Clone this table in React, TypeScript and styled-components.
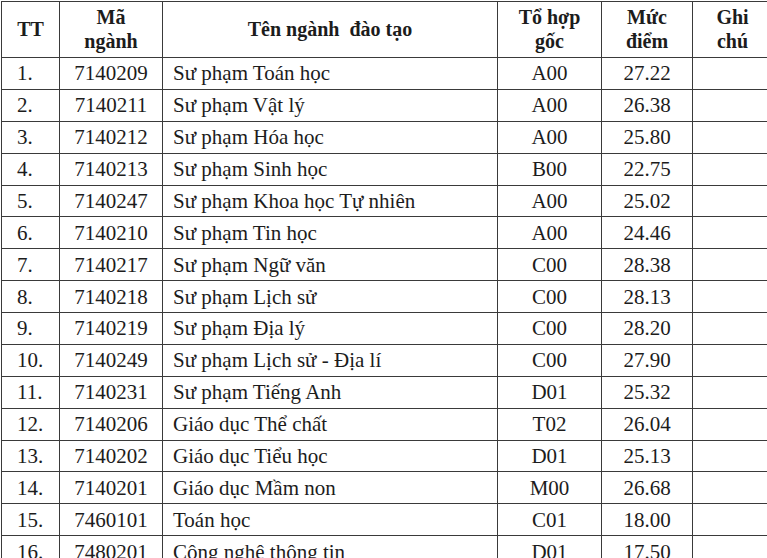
import React from 'react';
import styled, { createGlobalStyle } from 'styled-components';

const GlobalStyle = createGlobalStyle`
    html, body {
        margin: 0;
        padding: 0;
        background: #fff;
        overflow: hidden;
    }
    body {
        font-family: 'Liberation Serif', 'DejaVu Serif', serif;
        color: #1c1c1c;
    }
`;

const Page = styled.div`
    width: 767px;
    height: 558px;
    overflow: hidden;
    padding: 1px 0 0 1px;
    box-sizing: border-box;
`;

const Table = styled.table`
    border-collapse: collapse;
    table-layout: fixed;
    width: 771px;
    font-family: 'Liberation Serif', 'DejaVu Serif', serif;
    font-size: 21px;
    color: #1c1c1c;
`;

const Col = styled.col<{ w: number }>`
    width: ${(p) => p.w}px;
`;

const Head = styled.th`
    height: 53px;
    border: 1.5px solid #3a3a3a;
    font-weight: bold;
    font-size: 20px;
    line-height: 24px;
    text-align: center;
    vertical-align: middle;
    padding: 0 0 2px 0;
`;

type CellProps = {
    align?: 'left' | 'center';
    pad?: number;
};

const Cell = styled.td<CellProps>`
    height: 30.88px;
    border: 1.5px solid #3a3a3a;
    padding: 0 0 0 ${(p) => p.pad ?? 0}px;
    text-align: ${(p) => p.align ?? 'center'};
    vertical-align: middle;
    white-space: nowrap;
    line-height: 30px;
`;

const rows: [string, string, string, string, string][] = [
    ['1.', '7140209', 'Sư phạm Toán học', 'A00', '27.22'],
    ['2.', '7140211', 'Sư phạm Vật lý', 'A00', '26.38'],
    ['3.', '7140212', 'Sư phạm Hóa học', 'A00', '25.80'],
    ['4.', '7140213', 'Sư phạm Sinh học', 'B00', '22.75'],
    ['5.', '7140247', 'Sư phạm Khoa học Tự nhiên', 'A00', '25.02'],
    ['6.', '7140210', 'Sư phạm Tin học', 'A00', '24.46'],
    ['7.', '7140217', 'Sư phạm Ngữ văn', 'C00', '28.38'],
    ['8.', '7140218', 'Sư phạm Lịch sử', 'C00', '28.13'],
    ['9.', '7140219', 'Sư phạm Địa lý', 'C00', '28.20'],
    ['10.', '7140249', 'Sư phạm Lịch sử - Địa lí', 'C00', '27.90'],
    ['11.', '7140231', 'Sư phạm Tiếng Anh', 'D01', '25.32'],
    ['12.', '7140206', 'Giáo dục Thể chất', 'T02', '26.04'],
    ['13.', '7140202', 'Giáo dục Tiểu học', 'D01', '25.13'],
    ['14.', '7140201', 'Giáo dục Mầm non', 'M00', '26.68'],
    ['15.', '7460101', 'Toán học', 'C01', '18.00'],
    ['16.', '7480201', 'Công nghệ thông tin', 'D01', '17.50'],
];

const App: React.FC = () => {
    return (
        <Page>
            <GlobalStyle />
            <Table>
                <colgroup>
                    <Col w={58} />
                    <Col w={103} />
                    <Col w={335} />
                    <Col w={104} />
                    <Col w={91} />
                    <Col w={80} />
                </colgroup>
                <thead>
                    <tr>
                        <Head>TT</Head>
                        <Head>Mã<br />ngành</Head>
                        <Head>Tên ngành&nbsp; đào tạo</Head>
                        <Head>Tổ hợp<br />gốc</Head>
                        <Head>Mức<br />điểm</Head>
                        <Head>Ghi<br />chú</Head>
                    </tr>
                </thead>
                <tbody>
                    {rows.map(([tt, code, name, group, score]) => (
                        <tr key={tt}>
                            <Cell align="left" pad={15}>{tt}</Cell>
                            <Cell>{code}</Cell>
                            <Cell align="left" pad={10}>{name}</Cell>
                            <Cell>{group}</Cell>
                            <Cell>{score}</Cell>
                            <Cell />
                        </tr>
                    ))}
                </tbody>
            </Table>
        </Page>
    );
};

export default App;
